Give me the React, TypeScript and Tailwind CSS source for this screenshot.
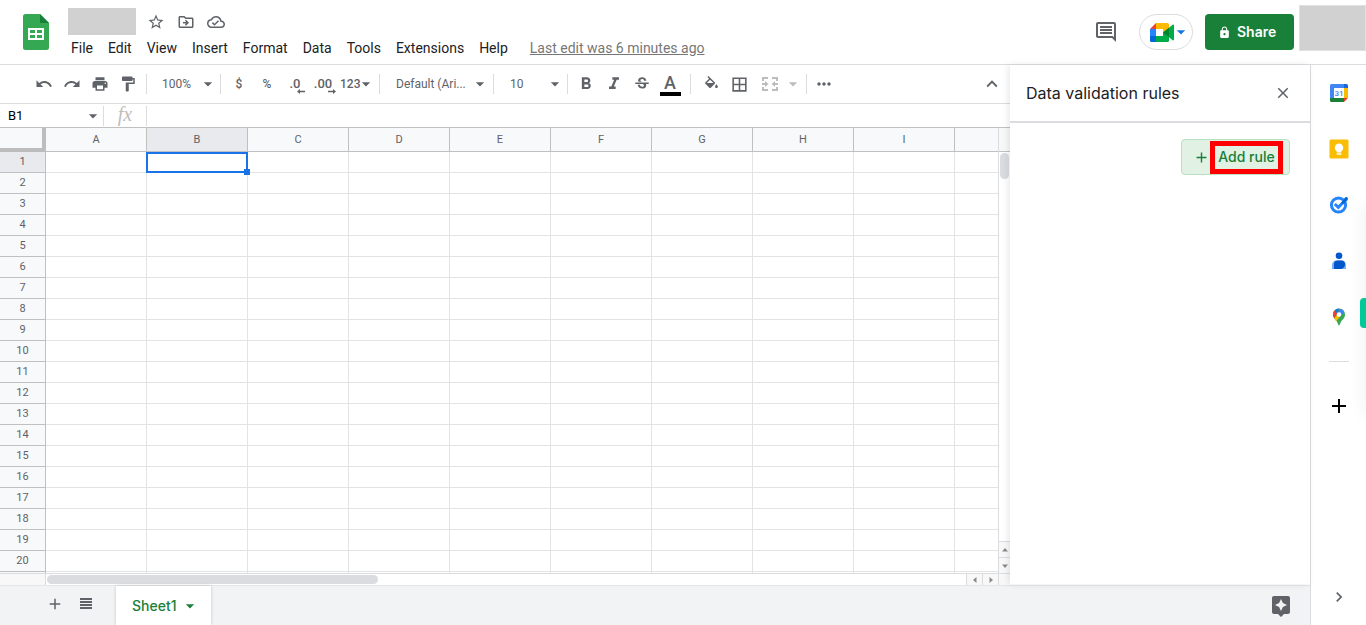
import type { ReactNode } from 'react'
import {
  MdAdd, MdArrowDropDown, MdAssistant, MdBorderAll, MdChevronRight, MdClose, MdExpandLess,
  MdFormatBold, MdFormatItalic, MdFormatPaint, MdLock, MdMoreHoriz, MdOutlineCloudDone,
  MdOutlineComment, MdOutlineDriveFileMove, MdPrint, MdRedo, MdStarBorder,
  MdStrikethroughS, MdUndo,
} from 'react-icons/md'

const MENUS = ['File', 'Edit', 'View', 'Insert', 'Format', 'Data', 'Tools', 'Extensions', 'Help']
// the last column and row are only partly in view and carry no label
const COLUMNS = ['A', 'B', 'C', 'D', 'E', 'F', 'G', 'H', 'I', '']
const ROWS = Array.from({ length: 21 }, (_, i) => i + 1)

function SheetsLogo() {
  return (
    <svg viewBox="0 0 26 36" className="h-9 w-[26px]" aria-hidden="true">
      <path fill="#34a853" d="M2.500 0H17l9 9v24.500a2.500 2.500 0 0 1-2.500 2.500h-21A2.500 2.500 0 0 1 0 33.500v-31A2.500 2.500 0 0 1 2.500 0z" />
      <path fill="#188038" d="M17 0l9 9h-9z" />
      <path fill="#fff" fillRule="evenodd" d="M5 14h16v12H5zM7 16v3h5v-3zM14 16v3h5v-3zM7 21v3h5v-3zM14 21v3h5v-3z" />
    </svg>
  )
}

function MeetLogo() {
  return (
    <svg viewBox="0 0 24 19" className="h-[19px] w-6 shrink-0" aria-hidden="true">
      <path fill="#ea4335" d="M6 0v6H0z" />
      <path fill="#2684fc" d="M0 6h6v7H0z" />
      <path fill="#0066da" d="M0 13h6v6H1.500A1.500 1.500 0 0 1 0 17.500z" />
      <path fill="#ffba00" d="M6 0h11.500A1.500 1.500 0 0 1 19 1.500V6l-6 3.500V6H6z" />
      <path fill="#00ac47" d="M6 13h7V9.500l6-4.700v12.700a1.500 1.500 0 0 1-1.500 1.500H6z" />
      <path fill="#00832d" d="M13 9.500L19 4.700v9.600z" />
      <path fill="#00ac47" d="M19 4.700l3.600-2.900c.6-.5 1.400-.1 1.400.6v14.200c0 .7-.8 1.100-1.400.6L19 14.300z" />
    </svg>
  )
}

function CalendarLogo() {
  return (
    <svg viewBox="0 0 20 20" className="size-5" aria-hidden="true">
      <path fill="#4285f4" d="M2.500 1H15v4H5v10H1V2.500A1.500 1.500 0 0 1 2.500 1z" />
      <path fill="#1967d2" d="M15 1h2.500A1.500 1.500 0 0 1 19 2.500V5h-4z" />
      <path fill="#fbbc04" d="M15 5h4v10h-4z" />
      <path fill="#188038" d="M5 15h10v4H2.500A1.500 1.500 0 0 1 1 17.500V15z" />
      <path fill="#ea4335" d="M15 15h4l-4 4z" />
      <path fill="#fff" d="M5 5h10v10H5z" />
      <text x="10" y="13" textAnchor="middle" fontSize="8" fontWeight="500" fontFamily="Roboto, sans-serif" fill="#4285f4">31</text>
    </svg>
  )
}

function KeepLogo() {
  return (
    <svg viewBox="0 0 20 20" className="size-5" aria-hidden="true">
      <rect x="0.500" y="0.500" width="19" height="19" rx="1.500" fill="#fbbc04" />
      <path fill="#fff" d="M10 4.500a4.200 4.200 0 0 0-2.300 7.700v1.300h4.600v-1.300A4.200 4.200 0 0 0 10 4.500zM7.700 14.300h4.600v1.500H7.700z" />
    </svg>
  )
}

function TasksLogo() {
  return (
    <svg viewBox="0 0 20 20" className="size-5" fill="none" aria-hidden="true">
      <circle cx="9.500" cy="10" r="7.100" stroke="#2684fc" strokeWidth="3" />
      <path stroke="#2684fc" strokeWidth="3" d="M5.800 9l3.500 3.400 4-4.200" />
      <path stroke="#0066da" strokeWidth="3" d="M13 8.500l4.500-4.600" />
      <circle cx="17.200" cy="3.700" r="1.800" fill="#0066da" />
    </svg>
  )
}

function ContactsLogo() {
  return (
    <svg viewBox="0 0 20 20" className="size-5" aria-hidden="true">
      <circle cx="10" cy="4.800" r="3.300" fill="#0057cc" />
      <path fill="#7baaf7" d="M7.500 9.500h5A4.500 4.500 0 0 1 17 14v4H3v-4a4.500 4.500 0 0 1 4.500-4.500z" />
      <path fill="#0057cc" d="M8 9.500h4.500a3.500 3.500 0 0 1 3.500 3.500c0 2.800-2 5-4.500 5H5v-5a3.500 3.500 0 0 1 3-3.500z" />
    </svg>
  )
}

function MapsLogo() {
  return (
    <svg viewBox="0 0 20 20" className="size-5" aria-hidden="true">
      <path fill="#34a853" d="M10 1.500a6 6 0 0 1 6 6c0 3.400-2.300 4.800-3.700 6.700-1.300 1.700-1.400 4.300-2.300 4.300s-1-2.600-2.300-4.300C6.300 12.300 4 10.900 4 7.500a6 6 0 0 1 6-6z" />
      <path fill="#fbbc04" d="M5.200 11.200L8.300 7.500l3 1.700-4.200 5c-.7-1.100-1.400-2-1.900-3z" />
      <path fill="#ea4335" d="M5.400 3.600L8.600 6.300 5.200 10.900C4.400 10 4 8.900 4 7.500c0-1.500.5-2.800 1.400-3.900z" />
      <path fill="#1a73e8" d="M5.400 3.600a6 6 0 0 1 4.600-2.100L8.400 6.400z" />
      <path fill="#4285f4" d="M10 1.500c2.400 0 4.500 1.400 5.400 3.500l-3.800 4.300L8.300 6.300l3.700-4.500z" />
      <circle cx="10" cy="7.500" r="2.300" fill="#fff" />
    </svg>
  )
}

function FillIcon() {
  return (
    <svg viewBox="0 0 24 24" className="size-[17px]" fill="currentColor" aria-hidden="true">
      <path d="M16.560 8.940L7.620 0 6.210 1.410l2.380 2.380-5.150 5.150c-.59.59-.59 1.540 0 2.120l5.500 5.500c.29.29.68.44 1.060.44s.77-.15 1.060-.44l5.500-5.500c.59-.58.59-1.530 0-2.120zM5.210 10L10 5.210 14.790 10H5.210zM19 11.500s-2 2.170-2 3.500c0 1.100.9 2 2 2s2-.9 2-2c0-1.330-2-3.500-2-3.500z" />
    </svg>
  )
}

function MergeIcon() {
  return (
    <svg viewBox="0 0 18 18" className="size-[18px]" fill="currentColor" aria-hidden="true">
      <path d="M1 2h6v2H3v2H1zM11 2h6v4h-2V4h-4zM1 12h2v2h4v2H1zM15 12h2v4h-6v-2h4zM1 8h3V6l3.500 3L4 12v-2H1zM17 8h-3V6l-3.500 3L14 12v-2h3z" />
    </svg>
  )
}

function ListIcon() {
  return (
    <svg viewBox="0 0 12 11" className="h-[11px] w-3" fill="currentColor" aria-hidden="true">
      <path d="M0 0h12v2H0zM0 3h12v2H0zM0 6h12v2H0zM0 9h12v2H0z" />
    </svg>
  )
}

function Decimals({ text, dir }: { text: string; dir: 'left' | 'right' }) {
  return (
    <span className="relative text-[13px] font-medium">
      {text}
      <svg viewBox="0 0 8 5" className="absolute -right-1 -bottom-px h-[5px] w-2" fill="currentColor" aria-hidden="true">
        <path d={dir === 'left' ? 'M0 2.500L3 0v1.700h5v1.600H3V5z' : 'M8 2.500L5 0v1.700H0v1.600h5V5z'} />
      </svg>
    </span>
  )
}

function ToolButton({ label, children }: { label: string; children: ReactNode }) {
  return (
    <button aria-label={label} className="flex h-7 w-7 shrink-0 items-center justify-center">
      {children}
    </button>
  )
}

function Divider() {
  return <span className="h-5 w-px shrink-0 bg-[#dadce0]" />
}

function Header() {
  return (
    <header className="flex h-[65px] shrink-0 border-b border-[#dadce0]">
      <a href="#home" aria-label="Sheets home" className="ml-[23px] mt-[14px] h-9">
        <SheetsLogo />
      </a>
      <div className="ml-[19px] mt-2">
        <div className="flex items-center text-[#5f6368]">
          <span className="h-[27px] w-[68px] bg-[#d1d1d1]" />
          <div className="ml-[11px] flex gap-3">
            <button aria-label="Star"><MdStarBorder size={18} /></button>
            <button aria-label="Move"><MdOutlineDriveFileMove size={18} /></button>
            <button aria-label="Document status"><MdOutlineCloudDone size={18} /></button>
          </div>
        </div>
        <div className="ml-[3px] mt-[3px] flex items-center text-sm text-[#202124]">
          <nav className="flex gap-[15px]">
            {MENUS.map(m => <button key={m}>{m}</button>)}
          </nav>
          <a href="#history" className="ml-[22px] text-[#777] underline">Last edit was 6 minutes ago</a>
        </div>
      </div>
      <div className="ml-auto flex items-start">
        <button aria-label="Comments" className="mr-[21px] mt-5 text-[#5f6368]"><MdOutlineComment size={24} /></button>
        <button aria-label="Join a call" className="mr-3 mt-[14px] flex h-9 w-[54px] items-center rounded-full border border-[#dadce0] pl-[10px]">
          <MeetLogo />
          <MdArrowDropDown size={20} className="-ml-[3px] shrink-0 text-[#1a73e8]" />
        </button>
        <button className="mr-[5px] mt-[14px] flex h-9 w-[89px] items-center gap-[6px] rounded bg-[#188038] pl-[13px] font-['Inter',sans-serif] text-sm font-semibold text-white">
          <MdLock size={13} />
          Share
        </button>
        <span className="mt-[5px] h-[46px] w-[67px] border border-[#e0e0e0] bg-[#d1d1d1]" />
      </div>
    </header>
  )
}

function Toolbar() {
  return (
    <div className="flex h-[39px] shrink-0 items-center border-b border-[#dadce0] pl-[30px] text-xs text-[#5f6368]">
      <ToolButton label="Undo"><MdUndo size={18} /></ToolButton>
      <ToolButton label="Redo"><MdRedo size={18} /></ToolButton>
      <ToolButton label="Print"><MdPrint size={18} /></ToolButton>
      <ToolButton label="Paint format"><MdFormatPaint size={18} /></ToolButton>
      <span className="w-1" />
      <Divider />
      <button className="flex w-[73px] items-center justify-between pl-[15px] pr-[2px]">
        100%<MdArrowDropDown size={20} />
      </button>
      <Divider />
      <span className="w-1" />
      <ToolButton label="Format as currency"><span className="font-medium">$</span></ToolButton>
      <ToolButton label="Format as percent"><span className="font-medium">%</span></ToolButton>
      <ToolButton label="Decrease decimal places"><Decimals text=".0" dir="left" /></ToolButton>
      <ToolButton label="Increase decimal places"><Decimals text=".00" dir="right" /></ToolButton>
      <button className="flex w-[42px] items-center pl-[3px] font-medium">
        123<MdArrowDropDown size={20} className="-ml-1 shrink-0" />
      </button>
      <Divider />
      <button className="flex w-[113px] items-center justify-between pl-4 pr-[3px]">
        Default (Ari...<MdArrowDropDown size={20} />
      </button>
      <Divider />
      <button className="flex w-[73px] items-center justify-between pl-4 pr-[2px]">
        10<MdArrowDropDown size={20} />
      </button>
      <Divider />
      <span className="w-1" />
      <ToolButton label="Bold"><MdFormatBold size={20} /></ToolButton>
      <ToolButton label="Italic"><MdFormatItalic size={20} /></ToolButton>
      <ToolButton label="Strikethrough"><MdStrikethroughS size={18} /></ToolButton>
      <ToolButton label="Text color">
        <span className="flex flex-col items-center pt-[2px] text-lg font-medium leading-[18px]">
          A
          <span className="h-1 w-[21px] bg-black" />
        </span>
      </ToolButton>
      <span className="w-[6px]" />
      <Divider />
      <span className="w-[6px]" />
      <ToolButton label="Fill color"><FillIcon /></ToolButton>
      <ToolButton label="Borders"><MdBorderAll size={19} /></ToolButton>
      <div className="ml-[3px] flex items-center text-[#bdbdbd]">
        <ToolButton label="Merge cells"><MergeIcon /></ToolButton>
        <button aria-label="Merge type" className="flex w-[18px] justify-center"><MdArrowDropDown size={20} className="shrink-0" /></button>
      </div>
      <span className="w-1" />
      <Divider />
      <span className="w-[3px]" />
      <ToolButton label="More"><MdMoreHoriz size={20} /></ToolButton>
      <span className="flex-1" />
      <ToolButton label="Hide the menus"><MdExpandLess size={22} /></ToolButton>
      <span className="w-1" />
    </div>
  )
}

function FormulaBar() {
  return (
    <div className="flex h-6 shrink-0 items-center border-b border-[#c0c0c0]">
      <div className="flex w-[103px] items-center pl-2">
        <input aria-label="Name box" defaultValue="B1" className="w-[75px] text-[13px] text-black outline-none" />
        <button aria-label="Named ranges" className="text-[#5f6368]"><MdArrowDropDown size={20} /></button>
      </div>
      <Divider />
      <span className="w-[42px] pb-1 text-center font-['Liberation_Serif',serif] text-xl italic leading-5 text-[#bdbdbd]">fx</span>
      <Divider />
      <input aria-label="Formula" className="min-w-0 flex-1 px-2 text-[13px] outline-none" />
    </div>
  )
}

function Grid() {
  return (
    <div className="min-h-0 min-w-0 flex-1 overflow-hidden">
      <table className="w-[1056px] table-fixed border-separate border-spacing-0 text-[11px] text-[#5f6368]">
        <thead>
          <tr className="h-6">
            <td className="w-[46px] border-b-4 border-r-4 border-[#bdbdbd] bg-[#f8f9fa] p-0" />
            {COLUMNS.map(c => (
              <th
                key={c}
                scope="col"
                className={`w-[101px] border-b border-r border-[#c0c0c0] p-0 font-normal leading-[23px] ${c === 'B' ? 'bg-[#e8eaed]' : 'bg-[#f8f9fa]'}`}
              >
                {c}
              </th>
            ))}
          </tr>
        </thead>
        <tbody>
          {ROWS.map(r => (
            <tr key={r} className="h-[21px]">
              <th
                scope="row"
                className={`border-b border-r border-[#c0c0c0] p-0 font-normal leading-5 ${r === 1 ? 'bg-[#e8eaed]' : 'bg-[#f8f9fa]'}`}
              >
                {r < ROWS.length && r}
              </th>
              {COLUMNS.map(c => (
                <td key={c} className="relative border-b border-r border-[#e2e3e3] p-0">
                  {c === 'B' && r === 1 && (
                    <span className="absolute -bottom-px -left-px -right-px top-0 z-10 border-2 border-[#1a73e8]">
                      <span className="absolute -bottom-1 -right-1 size-[6px] bg-[#1a73e8]" />
                    </span>
                  )}
                </td>
              ))}
            </tr>
          ))}
        </tbody>
      </table>
    </div>
  )
}

function ScrollArrow({ label, d, className }: { label: string; d: string; className: string }) {
  return (
    <button aria-label={label} className={`flex shrink-0 items-center justify-center border-[#dadce0] bg-[#f8f8f8] ${className}`}>
      <svg viewBox="0 0 6 6" className="size-[6px]" fill="#8a8a8a" aria-hidden="true"><path d={d} /></svg>
    </button>
  )
}

function Spreadsheet() {
  return (
    <div className="flex min-h-0 flex-1 flex-col">
      <div className="flex min-h-0 flex-1">
        <Grid />
        <div className="flex w-3 shrink-0 flex-col border-l border-[#dadce0]">
          <span className="h-6 shrink-0 border-b border-[#c0c0c0] bg-[#f8f8f8]" />
          <span className="ml-px mt-px h-[26px] w-[9px] rounded-full bg-[#dadce0]" />
          <span className="flex-1" />
          <ScrollArrow label="Scroll up" d="M3 1l3 3.500H0z" className="h-4 border-t" />
          <ScrollArrow label="Scroll down" d="M3 5l3-3.500H0z" className="h-4 border-t" />
        </div>
      </div>
      <div className="flex h-3 shrink-0 border-t border-[#dadce0]">
        <span className="w-[46px] shrink-0 border-r border-[#dadce0] bg-[#f8f8f8]" />
        <div className="flex-1 pl-px pt-px">
          <div className="h-[9px] w-[36%] rounded-full bg-[#dadce0]" />
        </div>
        <ScrollArrow label="Scroll left" d="M1 3l3.500-3v6z" className="w-4 border-l" />
        <ScrollArrow label="Scroll right" d="M5 3L1.500 0v6z" className="w-4 border-l" />
        <span className="w-3 shrink-0 border-l border-[#dadce0] bg-[#f8f8f8]" />
      </div>
    </div>
  )
}

function ValidationPanel() {
  return (
    <aside className="relative z-10 mb-px flex w-[300px] shrink-0 flex-col bg-white shadow-[-2px_0_6px_rgba(60,64,67,0.12)]">
      <div className="flex h-[58px] items-center justify-between border-b-2 border-[#dadce0] pl-4 pr-[18px]">
        <h2 className="font-['Inter',sans-serif] text-base text-[#202124]">Data validation rules</h2>
        <button aria-label="Close" className="text-[#5f6368]"><MdClose size={18} /></button>
      </div>
      <div className="flex justify-end pr-5 pt-4">
        <button className="flex h-9 items-center rounded border border-[#b7e1c0] bg-[#e1f2e4] pl-[11px] pr-[6px] font-['Inter',sans-serif] text-sm font-medium text-[#188038]">
          <MdAdd size={17} />
          <span className="flex h-[33px] w-[73px] items-center justify-center whitespace-nowrap border-[5px] border-[#ff0000]">Add rule</span>
        </button>
      </div>
    </aside>
  )
}

function SheetTabs() {
  return (
    <footer className="flex h-10 shrink-0 items-center border-t border-[#e4e6e9] bg-[#f1f3f4] text-[#5f6368]">
      <div className="ml-[46px] flex items-center gap-4 pb-1">
        <button aria-label="Add sheet"><MdAdd size={18} /></button>
        <button aria-label="All sheets"><ListIcon /></button>
      </div>
      <button className="ml-6 flex h-full items-center gap-[3px] bg-white pl-4 pr-[11px] font-['Inter',sans-serif] text-sm font-medium text-[#188038] shadow-[0_0_3px_rgba(60,64,67,0.25)]">
        Sheet1
        <MdArrowDropDown size={20} />
      </button>
      <button aria-label="Explore" className="ml-auto mr-[17px]"><MdAssistant size={24} /></button>
    </footer>
  )
}

function SideRail() {
  const apps = [
    { name: 'Calendar', icon: <CalendarLogo /> },
    { name: 'Keep', icon: <KeepLogo /> },
    { name: 'Tasks', icon: <TasksLogo /> },
    { name: 'Contacts', icon: <ContactsLogo /> },
    { name: 'Maps', icon: <MapsLogo /> },
  ]
  return (
    <aside className="relative flex w-14 shrink-0 flex-col overflow-hidden border-l border-[#dadce0]">
      {apps.map(app => (
        <button key={app.name} aria-label={app.name} className="flex h-14 items-center justify-center">
          {app.icon}
        </button>
      ))}
      <span className="mx-auto mt-4 h-px w-5 bg-[#dadce0]" />
      <button aria-label="Get add-ons" className="mt-4 flex h-14 items-center justify-center text-black"><MdAdd size={24} /></button>
      <button aria-label="Hide side panel" className="mt-auto flex h-14 items-center justify-center text-[#5f6368]"><MdChevronRight size={20} /></button>
      <span className="absolute -right-1 top-[140px] h-[210px] w-1 shadow-[0_0_16px_rgba(0,0,0,0.15)]" />
      <button aria-label="Open extension" className="absolute right-0 top-[233px] h-[30px] w-[6px] rounded-l bg-[#00c99a]" />
    </aside>
  )
}

export default function App() {
  return (
    <div className="flex h-screen flex-col overflow-hidden bg-white font-['Roboto',sans-serif]">
      <Header />
      <div className="flex min-h-0 flex-1">
        <main className="flex min-w-0 flex-1 flex-col">
          <div className="flex min-h-0 flex-1">
            <div className="flex min-w-0 flex-1 flex-col">
              <Toolbar />
              <FormulaBar />
              <Spreadsheet />
            </div>
            <ValidationPanel />
          </div>
          <SheetTabs />
        </main>
        <SideRail />
      </div>
    </div>
  )
}
